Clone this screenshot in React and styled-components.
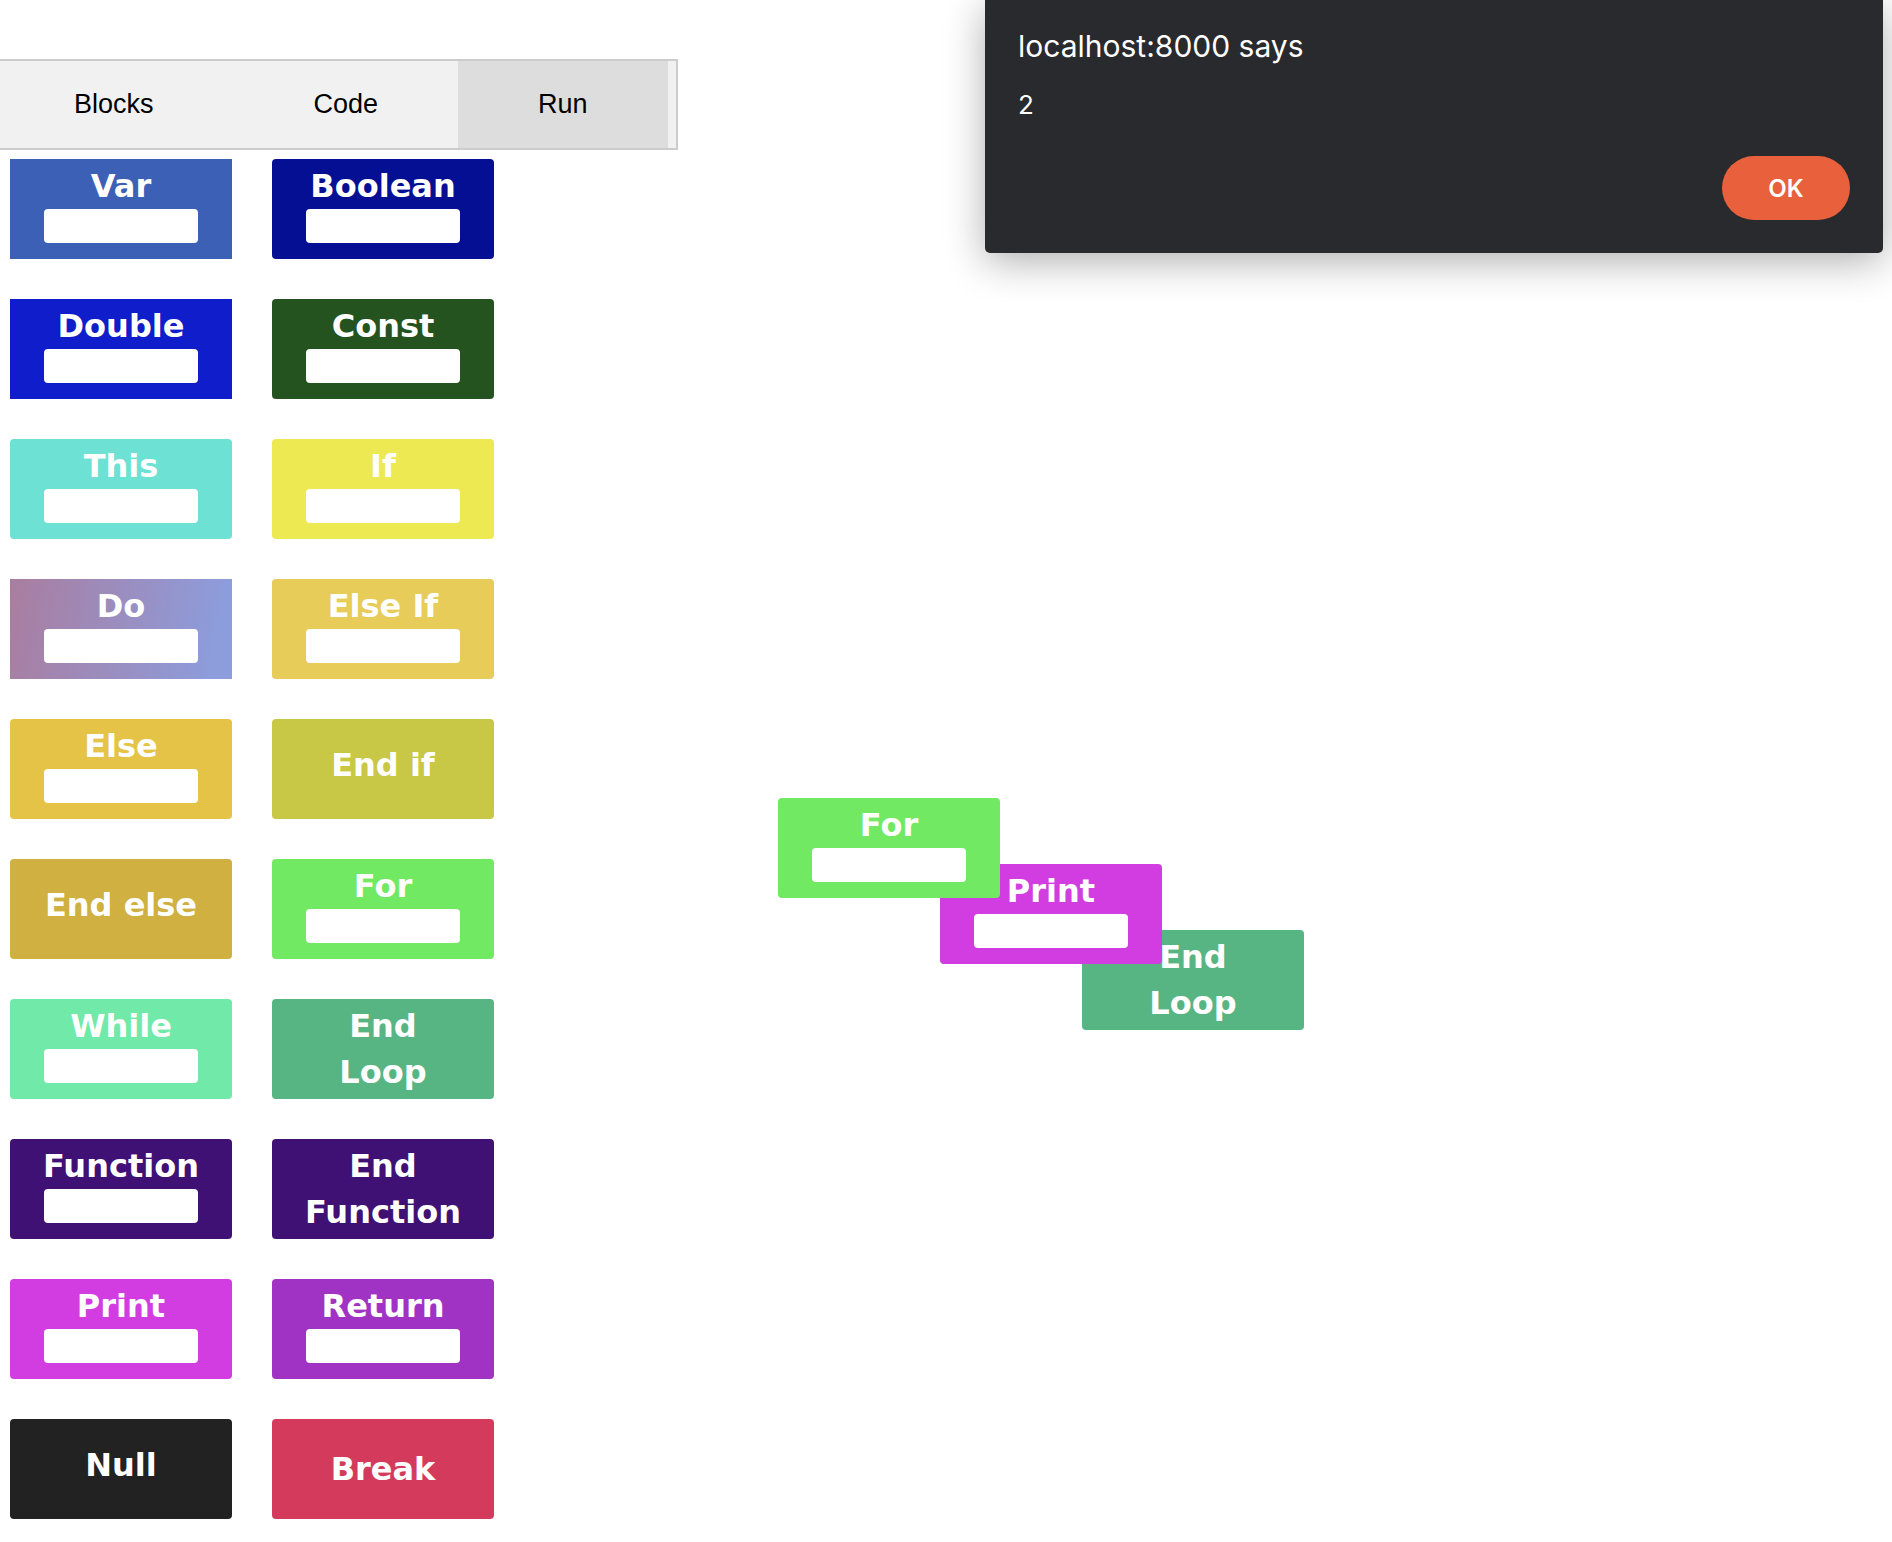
import React from "react";
import styled, { createGlobalStyle, css } from "styled-components";

const GlobalStyle = createGlobalStyle`
  * {
    box-sizing: border-box;
  }
  body {
    margin: 0;
    background: #fff;
    font-family: Arial, "Liberation Sans", sans-serif;
  }
`;

const Page = styled.div`
  position: relative;
  display: flex;
  flex-direction: column;
  align-items: stretch;
  padding-top: 59px;
  overflow: hidden;
`;

const TabBar = styled.nav`
  display: flex;
  align-self: flex-start;
  margin-left: -6px;
  padding-right: 8px;
  background: #f1f1f1;
  border: 2px solid #ccc;
  border-left: 0;
`;

const Tab = styled.button`
  padding: 28px 80px;
  border: 0;
  background: ${(p) => (p.$active ? "#ddd" : "transparent")};
  color: #000;
  font: 27px/31px Arial, "Liberation Sans", sans-serif;
  cursor: pointer;
`;

const Workspace = styled.main`
  display: flex;
  align-items: stretch;
`;

const Palette = styled.section`
  display: grid;
  grid-template-columns: repeat(2, 222px);
  gap: 40px;
  padding: 9px 10px;
`;

const Canvas = styled.section`
  position: relative;
  flex: 1;
`;

const Placed = styled.div`
  position: absolute;
  left: ${(p) => p.$x}px;
  top: ${(p) => p.$y}px;
  z-index: ${(p) => p.$z};
`;

const variants = {
  slot: css`
    gap: 1px;
    padding-top: 5px;
    line-height: 44px;
  `,
  lines: css`
    padding-top: 4px;
    line-height: 46px;
  `,
  single: css`
    justify-content: center;
    padding-bottom: 8px;
    line-height: 46px;
  `,
  middle: css`
    justify-content: center;
    line-height: 46px;
  `,
};

const Tile = styled.div`
  display: flex;
  flex-direction: column;
  align-items: center;
  width: 222px;
  height: 100px;
  border-radius: ${(p) => (p.$square ? 0 : 4)}px;
  background: ${(p) => p.$fill};
  color: #fff;
  font-family: "Comic Sans MS", "DejaVu Sans", sans-serif;
  font-size: 32px;
  font-weight: 700;
  text-align: center;
  cursor: grab;
  ${(p) => variants[p.$variant]}
`;

const Line = styled.span`
  display: block;
  white-space: nowrap;
`;

const Slot = styled.input`
  width: 154px;
  height: 34px;
  padding: 0 8px;
  border: 0;
  border-radius: 4px;
  background: #fff;
  font: 20px Arial, "Liberation Sans", sans-serif;
`;

const Dialog = styled.div`
  position: absolute;
  top: 0;
  right: 9px;
  z-index: 10;
  display: flex;
  flex-direction: column;
  width: 898px;
  max-width: 100%;
  padding: 28px 33px 33px 33px;
  border-radius: 0 0 5px 5px;
  background: #292a2e;
  box-shadow: 0 8px 40px rgba(0, 0, 0, 0.32);
  color: #fff;
  font-family: Inter, sans-serif;
`;

const DialogTitle = styled.h1`
  margin: 0 0 21px;
  font-size: 30px;
  font-weight: 400;
  line-height: 36px;
`;

const DialogText = styled.p`
  margin: 0 0 31px;
  font-size: 26px;
  line-height: 40px;
`;

const OkButton = styled.button`
  align-self: flex-end;
  width: 128px;
  height: 64px;
  border: 0;
  border-radius: 32px;
  background: #e8613c;
  color: #fff;
  font: 600 24px Inter, sans-serif;
  cursor: pointer;
`;

const tabs = ["Blocks", "Code", "Run"];

const kinds = {
  var: { lines: ["Var"], fill: "#3d60b7", variant: "slot", square: true },
  boolean: { lines: ["Boolean"], fill: "#050f93", variant: "slot" },
  double: { lines: ["Double"], fill: "#0f1dca", variant: "slot", square: true },
  const: { lines: ["Const"], fill: "#24531f", variant: "slot" },
  this: { lines: ["This"], fill: "#6de1d3", variant: "slot" },
  if: { lines: ["If"], fill: "#ece953", variant: "slot" },
  do: {
    lines: ["Do"],
    fill: "linear-gradient(100deg, #aa7d9f, #8d9cdb 90%)",
    variant: "slot",
    square: true,
  },
  elseIf: { lines: ["Else If"], fill: "#e8cc5a", variant: "slot" },
  else: { lines: ["Else"], fill: "#e4c347", variant: "slot" },
  endIf: { lines: ["End if"], fill: "#c9c746", variant: "single" },
  endElse: { lines: ["End else"], fill: "#cfb040", variant: "single" },
  for: { lines: ["For"], fill: "#71e963", variant: "slot" },
  while: { lines: ["While"], fill: "#71e9a8", variant: "slot" },
  endLoop: { lines: ["End", "Loop"], fill: "#57b584", variant: "lines" },
  function: { lines: ["Function"], fill: "#3f1174", variant: "slot" },
  endFunction: { lines: ["End", "Function"], fill: "#3f1174", variant: "lines" },
  print: { lines: ["Print"], fill: "#d13de0", variant: "slot" },
  return: { lines: ["Return"], fill: "#a033c4", variant: "slot" },
  null: { lines: ["Null"], fill: "#222222", variant: "single" },
  break: { lines: ["Break"], fill: "#d43a5b", variant: "middle" },
};

const program = [
  { kind: "for", x: 274, y: 648 },
  { kind: "print", x: 436, y: 714 },
  { kind: "endLoop", x: 578, y: 780 },
];

function Block({ kind }) {
  const { lines, fill, variant, square } = kinds[kind];
  const hasSlot = variant === "slot";
  return (
    <Tile
      as={hasSlot ? "label" : "div"}
      $fill={fill}
      $variant={variant}
      $square={square}
      draggable
    >
      {lines.map((text) => (
        <Line key={text}>{text}</Line>
      ))}
      {hasSlot && <Slot type="text" />}
    </Tile>
  );
}

export default function App() {
  return (
    <>
      <GlobalStyle />
      <Page>
        <TabBar>
          {tabs.map((name) => (
            <Tab key={name} type="button" $active={name === "Run"}>
              {name}
            </Tab>
          ))}
        </TabBar>
        <Workspace>
          <Palette>
            {Object.keys(kinds).map((kind) => (
              <Block key={kind} kind={kind} />
            ))}
          </Palette>
          <Canvas>
            {program.map(({ kind, x, y }, i) => (
              <Placed key={kind} $x={x} $y={y} $z={program.length - i}>
                <Block kind={kind} />
              </Placed>
            ))}
          </Canvas>
        </Workspace>
        <Dialog role="alertdialog" aria-labelledby="alert-title" aria-describedby="alert-text">
          <DialogTitle id="alert-title">localhost:8000 says</DialogTitle>
          <DialogText id="alert-text">2</DialogText>
          <OkButton type="button">OK</OkButton>
        </Dialog>
      </Page>
    </>
  );
}
